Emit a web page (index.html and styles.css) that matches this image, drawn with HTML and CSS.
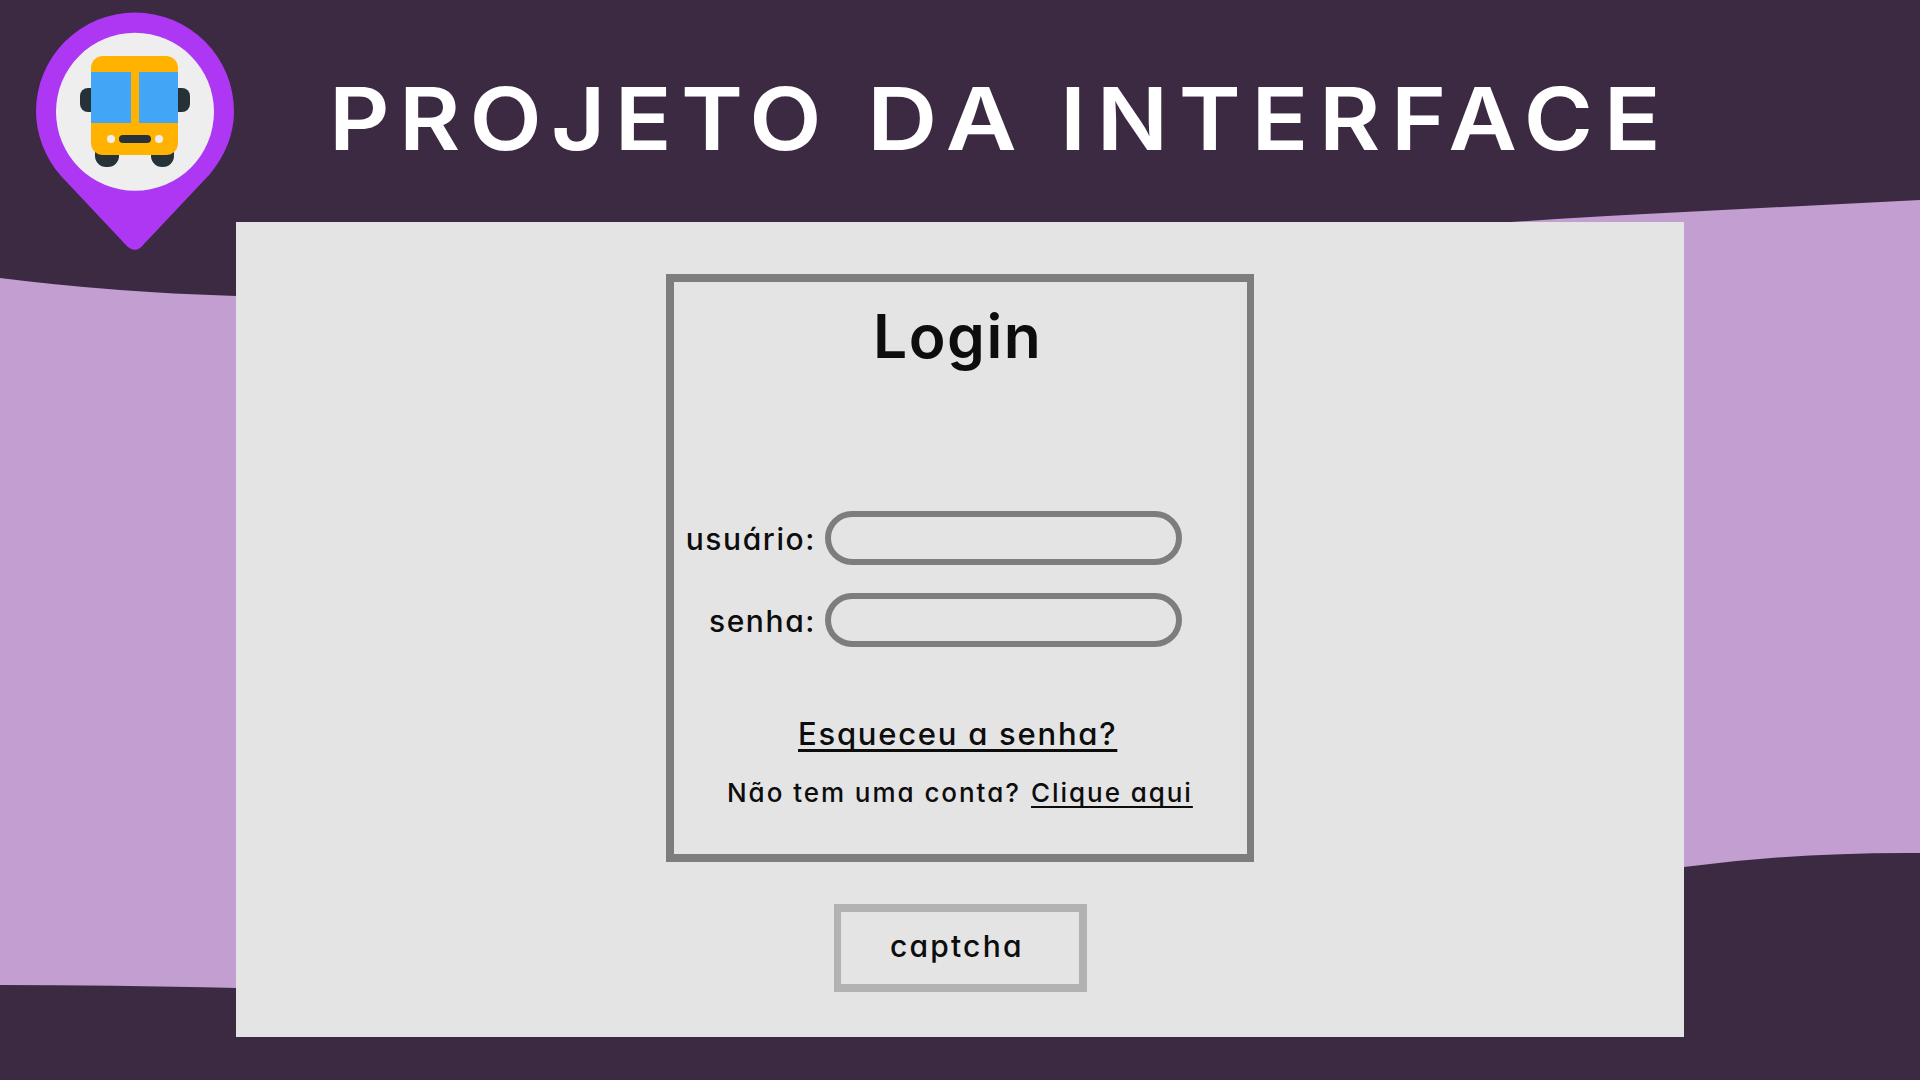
FILE: index.html
```html
<!DOCTYPE html>
<html lang="pt-BR">
<head>
<meta charset="utf-8">
<title>Projeto da Interface</title>
<link rel="stylesheet" href="styles.css">
</head>
<body>
<div class="slide">
  <svg class="waves" viewBox="0 0 1920 1080" aria-hidden="true">
    <path class="dark" d="M0 0H1920V200L1684 212Q1600 216 1511 222L1000 260Q600 314 236 296Q110 292 0 278Z"/>
    <path class="dark" d="M0 985Q110 985 236 988L1200 1000Q1500 890 1684 867Q1800 852 1920 853V1080H0Z"/>
  </svg>
  <header class="header">
    <svg class="logo" viewBox="0 0 236 260" aria-hidden="true">
      <path class="pin" d="M135 12.500A99 99 0 0 1 234 111.500C234 134 225 156 210 174L144 244Q135 255.500 125 244L61 176C45 158 36 134 36 111.500A99 99 0 0 1 135 12.500Z"/>
      <circle class="disc" cx="135" cy="111.800" r="79"/>
      <g class="rubber">
        <rect x="80" y="88" width="24" height="24" rx="8"/>
        <rect x="166" y="88" width="24" height="24" rx="8"/>
        <rect x="95" y="143" width="24" height="24" rx="11"/>
        <rect x="151" y="143" width="23" height="24" rx="11"/>
      </g>
      <rect class="bus" x="91" y="56" width="87" height="99" rx="12"/>
      <path class="glass" d="M91 72h40v51H91zM139 72h39v51h-39z"/>
      <rect class="rubber" x="119" y="135" width="32" height="8" rx="4"/>
      <circle class="disc" cx="111" cy="139" r="4"/>
      <circle class="disc" cx="159" cy="139" r="4"/>
    </svg>
    <h1 class="title"><span class="w1">PROJETO</span><span class="w2">DA</span><span class="w3">INTERFACE</span></h1>
  </header>
  <main class="panel">
    <form class="login">
      <h2 class="heading">Login</h2>
      <div class="fields">
        <label for="user">usuário:</label><input id="user" type="text">
        <label for="pass">senha:</label><input id="pass" type="password">
      </div>
      <a class="forgot">Esqueceu a senha?</a>
      <p class="signup"><span>Não tem uma conta?</span><a class="click">Clique aqui</a></p>
    </form>
    <div class="captcha">captcha</div>
  </main>
</div>
</body>
</html>
```
FILE: styles.css
```css
* { box-sizing: border-box; }

body {
  margin: 0;
  font-family: Inter, "Liberation Sans", sans-serif;
  color: #0d0d0d;
}

.slide {
  position: relative;
  width: 1920px;
  height: 1080px;
  overflow: hidden;
  background: #c29ed1;
}

.waves { position: absolute; inset: 0; width: 100%; height: 100%; }
.dark { fill: #3c2a43; }

.header {
  position: relative;
  display: flex;
  height: 222px;
}

.logo { flex: none; width: 236px; height: 260px; }
.pin { fill: #ae37f4; }
.disc { fill: #eee; }
.rubber { fill: #263238; }
.bus { fill: #ffb300; }
.glass { fill: #42a5f5; }

.title {
  display: flex;
  margin: 69px 0 0 93px;
  font-size: 87px;
  line-height: 100px;
  font-weight: 600;
  color: #fff;
  white-space: nowrap;
}
.title span { flex: none; transform: scaleX(1.08); transform-origin: left; }
.w1 { width: 538px; letter-spacing: 8.600px; }
.title .w2 { width: 193px; letter-spacing: 11px; transform: scaleX(1.12); }
.w3 { letter-spacing: 9.900px; }

.panel {
  position: relative;
  display: flex;
  flex-direction: column;
  align-items: center;
  width: 1448px;
  height: 815px;
  margin: 0 auto;
  padding-top: 52px;
  background: #e4e4e4;
}

.login {
  display: flex;
  flex-direction: column;
  width: 588px;
  height: 588px;
  border: 8px solid #7d7d7d;
  border-right-width: 7px;
  white-space: nowrap;
}

.heading {
  margin: 16px 0 0 199px;
  font-size: 60.500px;
  line-height: 76px;
  font-weight: 600;
  letter-spacing: 1.500px;
}

.fields {
  display: grid;
  grid-template-columns: 142px 357px;
  column-gap: 9px;
  row-gap: 28px;
  margin-top: 137px;
  font-size: 30px;
  font-weight: 500;
  font-feature-settings: "cv11";
}
.fields label { height: 54px; line-height: 56px; text-align: right; letter-spacing: 1.600px; }
.fields input {
  height: 54px;
  padding: 0 22px;
  border: 6px solid #7d7d7d;
  border-radius: 27px;
  background: transparent;
  font: inherit;
  outline: 0;
}

.forgot {
  align-self: flex-start;
  margin: 67px 0 0 124px;
  font-size: 31px;
  line-height: 40px;
  font-weight: 500;
  letter-spacing: 1.750px;
  font-feature-settings: "cv11";
  text-decoration: underline 3px;
  text-underline-offset: 4px;
  text-decoration-skip-ink: none;
}

.signup {
  display: flex;
  margin: 21px 0 0 53px;
  font-size: 26px;
  line-height: 36px;
  font-weight: 500;
  letter-spacing: 1.950px;
  font-feature-settings: "cv11";
}
.signup span { width: 304px; }
.click {
  text-decoration: underline 2px;
  text-underline-offset: 4px;
  text-decoration-skip-ink: none;
}

.captcha {
  width: 253px;
  height: 88px;
  margin: 42px 0 0 1px;
  padding-left: 49px;
  border: 8px solid #b2b2b2;
  border-left-width: 7px;
  font-size: 30px;
  line-height: 69px;
  font-weight: 500;
  letter-spacing: 2.200px;
  font-feature-settings: "cv11";
}
```
